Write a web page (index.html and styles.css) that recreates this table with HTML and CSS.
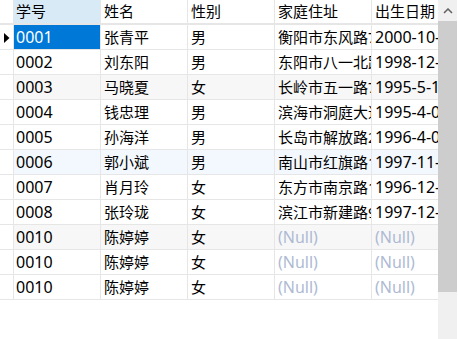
FILE: index.html
```html
<!DOCTYPE html>
<html>
<head>
<meta charset="utf-8">
<link rel="stylesheet" href="styles.css">
</head>
<body>
<div class="view">
  <div class="grid">
    <div class="row head">
      <div class="cell ind"></div>
      <div class="cell active-col">学号</div>
      <div class="cell">姓名</div>
      <div class="cell">性别</div>
      <div class="cell">家庭住址</div>
      <div class="cell">出生日期</div>
    </div>
    <div class="row">
      <div class="cell ind"><svg class="tri" width="6" height="10" viewBox="0 0 6 10"><polygon points="0,0 5.5,5 0,10" fill="#000"/></svg></div>
      <div class="cell num sel">0001</div>
      <div class="cell">张青平</div>
      <div class="cell">男</div>
      <div class="cell">衡阳市东风路77号</div>
      <div class="cell num">2000-10-01</div>
    </div>
    <div class="row">
      <div class="cell ind"></div>
      <div class="cell num">0002</div>
      <div class="cell">刘东阳</div>
      <div class="cell">男</div>
      <div class="cell">东阳市八一北路33号</div>
      <div class="cell num">1998-12-09</div>
    </div>
    <div class="row alt">
      <div class="cell ind"></div>
      <div class="cell num">0003</div>
      <div class="cell">马晓夏</div>
      <div class="cell">女</div>
      <div class="cell">长岭市五一路763号</div>
      <div class="cell num">1995-5-12</div>
    </div>
    <div class="row">
      <div class="cell ind"></div>
      <div class="cell num">0004</div>
      <div class="cell">钱忠理</div>
      <div class="cell">男</div>
      <div class="cell">滨海市洞庭大道279号</div>
      <div class="cell num">1995-4-08</div>
    </div>
    <div class="row">
      <div class="cell ind"></div>
      <div class="cell num">0005</div>
      <div class="cell">孙海洋</div>
      <div class="cell">男</div>
      <div class="cell">长岛市解放路27号</div>
      <div class="cell num">1996-4-03</div>
    </div>
    <div class="row hover">
      <div class="cell ind"></div>
      <div class="cell num">0006</div>
      <div class="cell">郭小斌</div>
      <div class="cell">男</div>
      <div class="cell">南山市红旗路113号</div>
      <div class="cell num">1997-11-06</div>
    </div>
    <div class="row">
      <div class="cell ind"></div>
      <div class="cell num">0007</div>
      <div class="cell">肖月玲</div>
      <div class="cell">女</div>
      <div class="cell">东方市南京路11号</div>
      <div class="cell num">1996-12-08</div>
    </div>
    <div class="row">
      <div class="cell ind"></div>
      <div class="cell num">0008</div>
      <div class="cell">张玲珑</div>
      <div class="cell">女</div>
      <div class="cell">滨江市新建路97号</div>
      <div class="cell num">1997-12-30</div>
    </div>
    <div class="row alt">
      <div class="cell ind"></div>
      <div class="cell num">0010</div>
      <div class="cell">陈婷婷</div>
      <div class="cell">女</div>
      <div class="cell num null">(Null)</div>
      <div class="cell num null">(Null)</div>
    </div>
    <div class="row">
      <div class="cell ind"></div>
      <div class="cell num">0010</div>
      <div class="cell">陈婷婷</div>
      <div class="cell">女</div>
      <div class="cell num null">(Null)</div>
      <div class="cell num null">(Null)</div>
    </div>
    <div class="row">
      <div class="cell ind"></div>
      <div class="cell num">0010</div>
      <div class="cell">陈婷婷</div>
      <div class="cell">女</div>
      <div class="cell num null">(Null)</div>
      <div class="cell num null">(Null)</div>
    </div>
  </div>
  <div class="scrollbar">
    <div class="arrow"><svg width="10" height="6" viewBox="0 0 10 6"><polyline points="1,5 5,1 9,5" fill="none" stroke="#606060" stroke-width="1.5"/></svg></div>
    <div class="thumb"></div>
    <div class="track"></div>
  </div>
</div>
</body>
</html>
```
FILE: styles.css
```css
html, body {
  margin: 0;
  padding: 0;
  background: #ffffff;
}
body {
  width: 458px;
  height: 339px;
  overflow: hidden;
  font-family: "Noto Sans", "Noto Sans CJK SC", sans-serif;
  font-size: 15px;
  color: #000;
}
.view {
  display: flex;
  height: 339px;
}
.grid {
  width: 438px;
  display: flex;
  flex-direction: column;
}
.row {
  display: grid;
  grid-template-columns: 14px 87px 87px 87px 97px 66px;
  height: 25px;
}
.cell {
  box-sizing: border-box;
  border-right: 1px solid #e6e6e6;
  border-bottom: 1px solid #e6e6e6;
  padding: 0 0 0 2px;
  line-height: 24px;
  white-space: nowrap;
  overflow: hidden;
}
.cell:nth-child(n+3) {
  padding-left: 3px;
}
.cell:last-child {
  border-right: none;
}
.cell.num {
  font-size: 16px;
}
.head .cell {
  border-bottom: 2px solid #e6e6e6;
  line-height: 23px;
}
.head .active-col {
  background: #d9eaf7;
}
.cell.ind {
  display: flex;
  align-items: center;
  padding: 0 0 0 4px;
}
.tri {
  display: block;
  margin-top: 1px;
}
.row.alt .cell {
  background: #f7f7f7;
}
.row.hover .cell {
  background: #f3f8fe;
}
.row .cell.ind {
  background: #fff;
}
.cell.sel {
  background: #0078d7;
  color: #fff;
}
.cell.null {
  color: #aebad3;
}
.scrollbar {
  width: 19px;
  display: flex;
  flex-direction: column;
  background: #f0f0f0;
}
.arrow {
  height: 21px;
  display: flex;
  align-items: center;
  justify-content: center;
}
.thumb {
  height: 271px;
  background: #cdcdcd;
}
.track {
  flex: 1;
}
```
